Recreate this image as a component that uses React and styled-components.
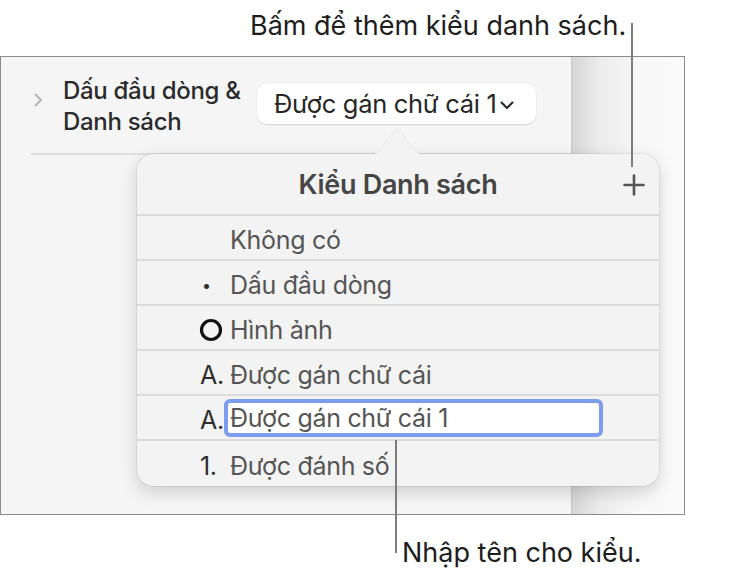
import React from 'react'
import styled, { createGlobalStyle } from 'styled-components'

/* ---------------------------- estilos ---------------------------- */
const Global = createGlobalStyle`
  html, body { margin: 0; padding: 0; background: #fff; }
  body { font-family: Inter, "Noto Sans", "Liberation Sans", sans-serif; }
`
const Page = styled.div`
  position: relative;
  width: 747px;
  height: 580px;
  background: #fff;
  color: #1d1d1d;
`
const Caption = styled.div`
  font-size: 27px;
  line-height: 32px;
  white-space: nowrap;
  padding-left: ${p => p.left}px;
  height: ${p => p.height}px;
  padding-top: ${p => p.top}px;
  box-sizing: border-box;
`
const Leader = styled.div`
  position: absolute;
  left: ${p => p.x}px;
  top: ${p => p.y}px;
  width: 2px;
  height: ${p => p.h}px;
  background: #7d7d7d;
`
const Frame = styled.div`
  position: relative;
  width: 685px;
  height: 459px;
  box-sizing: border-box;
  border: 1px solid #8c8c8c;
  display: flex;
  background: #f5f5f5;
`
const Main = styled.div`
  width: 570px;
  padding: 18px 0 0 30px;
  box-sizing: border-box;
`
const Strip = styled.div`
  flex: 1;
  border-left: 1px solid #c9c9c9;
  background: linear-gradient(to right, #d6d6d6 0%, #ececec 25%, #f8f8f8 60%, #fbfbfb 100%);
`
const HeaderRow = styled.div`
  display: flex;
  align-items: flex-start;
  height: 78px;
  border-bottom: 2px solid #dedede;
`
const Chevron = styled.svg`
  margin: 18px 20px 0 3px;
  flex: none;
`
const Label = styled.div`
  width: 194px;
  flex: none;
  font-size: 24px;
  font-weight: 500;
  line-height: 31px;
  color: #2a2a2a;
  letter-spacing: -0.3px;
  white-space: nowrap;
`
const PopButton = styled.div`
  margin-top: 8px;
  width: 279px;
  height: 41px;
  box-sizing: border-box;
  background: #fff;
  border-radius: 10px;
  box-shadow: 0 0.5px 1.5px rgba(0,0,0,0.14);
  display: flex;
  align-items: center;
  padding-left: 17px;
  font-size: 25.5px;
  color: #262626;
  letter-spacing: -0.3px;
  white-space: nowrap;
  gap: 3px;
`
const Popover = styled.div`
  position: absolute;
  left: 136px;
  top: 97px;
  width: 522px;
  height: 332px;
  background: #f3f3f3;
  border-radius: 16px;
  box-shadow: 0 0 0 0.5px rgba(0,0,0,0.12), 0 6px 18px rgba(0,0,0,0.16);
`
const Arrow = styled.svg`
  position: absolute;
  left: 227px;
  top: -25px;
`
const PopTitle = styled.div`
  position: relative;
  height: 62px;
  box-sizing: border-box;
  border-bottom: 2px solid #dcdcdc;
  display: flex;
  align-items: center;
  justify-content: center;
  font-size: 27px;
  font-weight: 600;
  color: #454545;
  letter-spacing: -0.3px;
`
const Plus = styled.svg`
  position: absolute;
  right: 14px;
  top: 20px;
`
const Row = styled.div`
  display: grid;
  grid-template-columns: 93px 1fr;
  align-items: center;
  height: 45px;
  padding-top: 4px;
  box-sizing: border-box;
  border-bottom: ${p => (p.last ? 'none' : '2px solid #dcdcdc')};
  font-size: 25px;
  letter-spacing: -0.3px;
  white-space: nowrap;
`
const Marker = styled.div`
  padding-left: 63px;
  color: #2e2e2e;
  display: flex;
  align-items: center;
`
const Text = styled.div`
  color: #555;
`
const Field = styled.div`
  margin-left: -6px;
  margin-top: -4px;
  width: 379px;
  height: 38px;
  box-sizing: border-box;
  border: 4px solid #7c9cee;
  border-radius: 6px;
  background: #fff;
  padding-left: 2px;
  display: flex;
  align-items: center;
  color: #555;
`

const rows = [
  { marker: '', label: 'Không có' },
  { marker: '•', label: 'Dấu đầu dòng' },
  { marker: 'ring', label: 'Hình ảnh' },
  { marker: 'A.', label: 'Được gán chữ cái' },
  { marker: 'A.', label: 'Được gán chữ cái 1', edit: true },
  { marker: '1.', label: 'Được đánh số' },
]

const App = () => {
  return (
    <Page>
      <Global />
      <Caption left={250} top={10} height={56}>Bấm để thêm kiểu danh sách.</Caption>
      <Frame>
        <Main>
          <HeaderRow>
            <Chevron width="9" height="14" viewBox="0 0 9 14">
              <path d="M1.5 1.5 L7 7 L1.5 12.5" fill="none" stroke="#b3b3b3" strokeWidth="1.8" strokeLinecap="round" strokeLinejoin="round" />
            </Chevron>
            <Label>Dấu đầu dòng &amp;<br />Danh sách</Label>
            <PopButton>
              Được gán chữ cái 1
              <svg width="14" height="9" viewBox="0 0 14 9" style={{ marginTop: 4 }}>
                <path d="M1.5 1.5 L7 7 L12.5 1.5" fill="none" stroke="#262626" strokeWidth="2" strokeLinecap="round" strokeLinejoin="round" />
              </svg>
            </PopButton>
          </HeaderRow>
        </Main>
        <Strip />
        <Popover>
          <Arrow width="66" height="26" viewBox="0 0 66 26">
            <path d="M0 26 C10 26 14 24 20 16 L29 3 C31 0.5 35 0.5 37 3 L46 16 C52 24 56 26 66 26 Z" fill="#f3f3f3" stroke="rgba(0,0,0,0.08)" strokeWidth="0.8" />
            <rect x="0" y="25" width="66" height="2" fill="#f3f3f3" />
          </Arrow>
          <PopTitle>
            Kiểu Danh sách
            <Plus width="22" height="22" viewBox="0 0 22 22">
              <path d="M11 1.5 V20.5 M1.5 11 H20.5" stroke="#555" strokeWidth="2.6" strokeLinecap="round" />
            </Plus>
          </PopTitle>
          {rows.map((r, i) => (
            <Row key={i} last={i === rows.length - 1}>
              <Marker>
                {r.marker === 'ring' ? (
                  <svg width="24" height="24" viewBox="0 0 24 24" style={{ marginLeft: -1 }}>
                    <circle cx="12" cy="12" r="9.5" fill="none" stroke="#111" strokeWidth="3.2" />
                  </svg>
                ) : r.marker === '•' ? (
                  <span style={{ fontSize: 16, marginLeft: 2 }}>•</span>
                ) : (
                  r.marker
                )}
              </Marker>
              {r.edit ? <Field>{r.label}</Field> : <Text>{r.label}</Text>}
            </Row>
          ))}
        </Popover>
      </Frame>
      <Caption left={402} top={22} height={65}>Nhập tên cho kiểu.</Caption>
      <Leader x={631} y={23} h={144} />
      <Leader x={395} y={440} h={113} />
    </Page>
  )
}
export default App
